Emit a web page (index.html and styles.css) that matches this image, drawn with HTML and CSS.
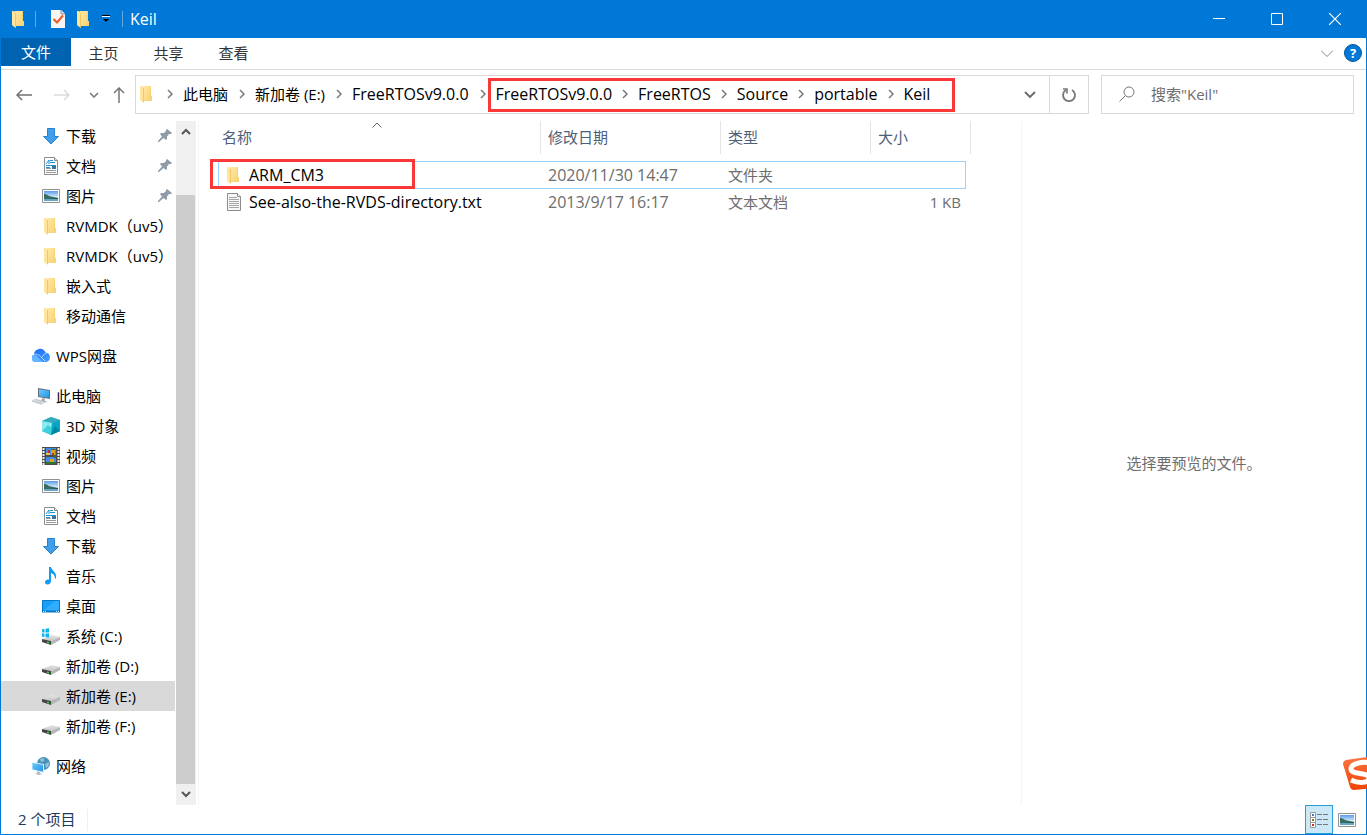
FILE: index.html
```html
<!DOCTYPE html>
<html lang="zh-CN">
<head>
  <meta charset="UTF-8">
  <meta name="viewport" content="width=device-width, initial-scale=1.0">
  <title>Keil</title>
  <link rel="stylesheet" href="styles.css">
</head>
<body>

<!-- 图标 -->
<svg class="sprite" aria-hidden="true">
  <linearGradient id="folder-fill" x1="0" y1="0" x2="1" y2="1">
    <stop offset="0" stop-color="#ffe9a6"/><stop offset="1" stop-color="#f8d172"/>
  </linearGradient>
  <linearGradient id="sky" x1="0" y1="0" x2="0" y2="1">
    <stop offset="0" stop-color="#5a9be8"/><stop offset="0.6" stop-color="#d5ecfa"/><stop offset="1" stop-color="#4f91b5"/>
  </linearGradient>
  <linearGradient id="cloud-fill" x1="0" y1="0" x2="1" y2="1">
    <stop offset="0" stop-color="#1562f5"/><stop offset="1" stop-color="#46a5ff"/>
  </linearGradient>
  <linearGradient id="disk-top" x1="0" y1="0" x2="0" y2="1">
    <stop offset="0" stop-color="#e6e6e6"/><stop offset="1" stop-color="#c4c4c6"/>
  </linearGradient>
  <linearGradient id="screen-fill" x1="0" y1="0" x2="1" y2="1">
    <stop offset="0" stop-color="#69c8fb"/><stop offset="1" stop-color="#2296e6"/>
  </linearGradient>
  <linearGradient id="sogou-fill" x1="0" y1="0" x2="0" y2="1">
    <stop offset="0" stop-color="#fb7644"/><stop offset="1" stop-color="#f04305"/>
  </linearGradient>

  <symbol id="folder" viewBox="0 0 18 18">
    <path d="M5 1h8v10h1v5H5z" fill="#f3cb66"/>
    <path d="M5 1h7.500v10.500H14V16H5z" fill="url(#folder-fill)"/>
    <path d="M2 1h2l2 2v15l-3-2-1-1z" fill="#ffe69c"/>
    <path d="M5.500 3v14" stroke="#efc968" stroke-width="1"/>
  </symbol>
  <symbol id="download" viewBox="0 0 18 18">
    <path d="M5.500 1.500h7v8h4L9 17 1.500 9.500h4z" fill="#409eea" stroke="#2483cf"/>
  </symbol>
  <symbol id="document" viewBox="0 0 18 18">
    <path d="M2.500.5h10l3 3v14h-13z" fill="#fff" stroke="#8c8c8c"/>
    <path d="M12.500.5v3h3" fill="#ddd" stroke="#8c8c8c"/>
    <path d="M4 7l3-4v4M8 3.500h3M8 5.500h5M4 8.500h10M4 10.500h4" fill="none" stroke="#1b91d6"/>
    <path d="M10 9h4v3h-4z" fill="#33739d"/>
    <path d="M4 11.500h5M4 13.500h10M4 15.500h10" stroke="#999"/>
  </symbol>
  <symbol id="text-file" viewBox="0 0 18 18">
    <path d="M2.500.5h10l3 3v14h-13z" fill="#f7f7f7" stroke="#8c8c8c"/>
    <path d="M12.500.5v3h3" fill="#fff" stroke="#8c8c8c"/>
    <path d="M4 4.500h8M4 6.500h10M4 8.500h10M4 10.500h10M4 12.500h10M4 14.500h10" stroke="#a5a5a5"/>
  </symbol>
  <symbol id="picture" viewBox="0 0 18 18">
    <path d="M.5 2.500h17v13H.5z" fill="#fff" stroke="#929292"/>
    <path d="M2 4h14v10H2z" fill="url(#sky)"/>
    <path d="M2 7c3 0 4 2 7 2.500l7 1.500v1H2z" fill="#396c5f"/>
    <path d="M2 12h14v2H2z" fill="#68a5c6"/>
    <path d="M8 12l8-1v1z" fill="#224a48"/>
  </symbol>
  <symbol id="cloud" viewBox="0 0 18 18">
    <path d="M3 15a4 4 0 0 1-1-7.600A6 6 0 0 1 13.500 5.500a4.800 4.800 0 0 1 .5 9.500z" fill="url(#cloud-fill)"/>
    <path d="M0 9c3-2 5-.5 7 2l4 4H3a4 4 0 0 1-3-6z" fill="#65b4ff"/>
    <path d="M1 8c3-2 6 0 8 2l4 4M10 10l2.500-3 2-.5" fill="none" stroke="#d4eaff" stroke-width=".8"/>
  </symbol>
  <symbol id="computer" viewBox="0 0 18 18">
    <path d="M6 1l12 2v9L6 10z" fill="#65717a"/>
    <path d="M7 2.200l10 1.600v7L7 9.200z" fill="url(#screen-fill)"/>
    <path d="M10 11l3 .6V14l3 1-5 .5-2-1z" fill="#a8b0b6"/>
    <path d="M-1 14l5-2 9 3-4 2.500z" fill="#dce0e3" stroke="#b9c0c5" stroke-width=".5"/>
    <path d="M1 14l8 2.200M4 12.800l7 2.200" stroke="#a8b0b6" stroke-width=".5"/>
  </symbol>
  <symbol id="cube" viewBox="0 0 18 18">
    <path d="M0 4l9-4 9 3v11l-9 4-9-4z" fill="#21bcd0"/>
    <path d="M0 4l9-4 9 3-8 3z" fill="#35aabd"/>
    <path d="M0 4l10 2-1 12-9-4z" fill="#8ce9ee"/>
    <path d="M0 14l6-6 4 3-1 7z" fill="#3fd0db"/>
    <path d="M10 6l8-3v11l-9 4z" fill="#08a5c4"/>
    <path d="M9 18l4-9 5 5z" fill="#04859f"/>
  </symbol>
  <symbol id="video" viewBox="0 0 18 18">
    <path d="M0 0h18v18H0z" fill="#4b4b4b"/>
    <path d="M1.500 1v17M16.500 1v17" stroke="#f2f2f2" stroke-width="2" stroke-dasharray="2 1"/>
    <path d="M4 1h10v7H4zM4 10h10v7H4z" fill="#438be8"/>
    <path d="M9 3h4v5H9zM8 12h4v4H8z" fill="#dfa323"/>
    <path d="M4 6h4v2H4z" fill="#f9c44b"/>
    <path d="M6 3h2v3H6zM10 6h2v2h-2z" fill="#c23024"/>
    <path d="M9 2h4v1H9zM4 15h10v2H4zM12 8h2v3h-2z" fill="#36722d"/>
  </symbol>
  <symbol id="music" viewBox="0 0 18 18">
    <path d="M7 0h2c1 4 6 5 5 11l-1 1c0-3-1-5-4-6v8c0 2-1.500 3.500-3.500 3.500S3 16.500 3 15s2-3 4-2.500z" fill="#129bf1"/>
  </symbol>
  <symbol id="desktop" viewBox="0 0 18 18">
    <path d="M.5 3.500h17v11H.5z" fill="#17a0fa" stroke="#0878c2"/>
    <path d="M1 14L13 4h4v10z" fill="#31adff"/>
    <path d="M0 13.500h18v2H0z" fill="#0878c2"/>
    <path d="M1 14.500h3M14 14.500h3" stroke="#cceaff" stroke-dasharray="1 1"/>
  </symbol>
  <symbol id="disk" viewBox="0 0 18 18">
    <path d="M0 12l10-4 8 2-9 4z" fill="url(#disk-top)"/>
    <path d="M0 12l9 2v4L0 15z" fill="#414543"/>
    <path d="M9 14l9-4v3l-9 5z" fill="#b4b5b8"/>
    <path d="M5 14.500l2 .5v1.500L5 16z" fill="#38dd3c"/>
  </symbol>
  <symbol id="system-disk" viewBox="0 0 18 18">
    <path d="M0 12l10-4 8 2-9 4z" fill="url(#disk-top)"/>
    <path d="M0 12l9 2v4L0 15z" fill="#414543"/>
    <path d="M9 14l9-4v3l-9 5z" fill="#b4b5b8"/>
    <path d="M5 14.500l2 .5v1.500L5 16z" fill="#38dd3c"/>
    <path d="M-1 2.500l3.500-.5v3.500H-1zM3.500 1.800L7 1.300v4.200H3.500zM-1 6.500h3.500V10L-1 9.500zM3.500 6.500H7v4l-3.500-.4z" fill="#0eb4ee"/>
  </symbol>
  <symbol id="network" viewBox="0 0 18 18">
    <circle cx="11.500" cy="6.500" r="6.500" fill="#4b92bb"/>
    <path d="M8 2c3-2 5 0 4 2l-3 1zM13 7l4-2c0 4-1 5-3 6z" fill="#8fc3d8"/>
    <path d="M0 5l12 2v9L0 13z" fill="#d9f1fd"/>
    <path d="M.5 6L11 7.800v7L.5 12.200z" fill="url(#screen-fill)"/>
    <path d="M5 14.300l3 .7v1l2 1-3 1-4-1 2-1z" fill="#b4bec4"/>
  </symbol>
  <symbol id="pin" viewBox="0 0 14 14">
    <path d="M8 1l1-1 5 4-1 1h-2L9 7.500V10L8 11 5.500 9 1 13H0v-1l4-4.500L2 5l1-1h3l2-2z" fill="#8f9ba6"/>
  </symbol>
  <symbol id="chevron" viewBox="0 0 6 10">
    <path d="M1 1l4 4-4 4" fill="none" stroke="#777" stroke-width="1.500"/>
  </symbol>
</svg>

<div class="window">

  <!-- 标题栏 -->
  <header class="title-bar">
    <svg class="icon"><use href="#folder"/></svg>
    <span class="title-line"></span>
    <button class="quick-button" aria-label="属性">
      <svg class="icon" viewBox="0 0 18 18">
        <path d="M2 0h10l4 4v14H2z" fill="#f7f5f4"/>
        <path d="M12 0v4h4" fill="#ddd" stroke="#8797a5"/>
        <path d="M4.500 9L8 12.500l6-7" fill="none" stroke="#ea5b22" stroke-width="2"/>
      </svg>
    </button>
    <button class="quick-button" aria-label="新建文件夹"><svg class="icon"><use href="#folder"/></svg></button>
    <button class="quick-button quick-menu" aria-label="自定义快速访问工具栏">
      <svg width="8" height="8" viewBox="0 0 8 8"><path d="M0 .5h8" stroke="#000"/><path d="M0 1.500h8" stroke="#fff"/><path d="M1 4h6L4 7z" fill="#000"/></svg>
    </button>
    <span class="title-line"></span>
    <h1 class="title">Keil</h1>
    <div class="window-buttons">
      <button aria-label="最小化"><svg width="12" height="12" viewBox="0 0 12 12"><path d="M0 5.500h12" stroke="#fff"/></svg></button>
      <button aria-label="最大化"><svg width="12" height="12" viewBox="0 0 12 12"><path d="M.5.5h11v11H.5z" fill="none" stroke="#fff"/></svg></button>
      <button aria-label="关闭"><svg width="12" height="12" viewBox="0 0 12 12"><path d="M0 0l12 12M12 0L0 12" stroke="#fff" stroke-width="1.200"/></svg></button>
    </div>
  </header>

  <!-- 菜单 -->
  <nav class="ribbon">
    <button class="tab file-tab">文件</button>
    <button class="tab">主页</button>
    <button class="tab">共享</button>
    <button class="tab">查看</button>
    <div class="ribbon-right">
      <button aria-label="展开功能区"><svg width="12" height="7" viewBox="0 0 12 7"><path d="M0 .5l6 6 6-6" fill="none" stroke="#888"/></svg></button>
      <button class="help-button" aria-label="帮助">?</button>
    </div>
  </nav>

  <!-- 地址栏 -->
  <div class="toolbar">
    <button class="nav-button" aria-label="后退"><svg width="16" height="12" viewBox="0 0 16 12"><path d="M16 6H1M6 1L1 6l5 5" fill="none" stroke="#707070" stroke-width="1.500"/></svg></button>
    <button class="nav-button" aria-label="前进"><svg width="16" height="12" viewBox="0 0 16 12"><path d="M0 6h15M10 1l5 5-5 5" fill="none" stroke="#dadada" stroke-width="1.500"/></svg></button>
    <button class="nav-button narrow" aria-label="最近浏览的位置"><svg width="10" height="6" viewBox="0 0 10 6"><path d="M1 1l4 4 4-4" fill="none" stroke="#777" stroke-width="1.500"/></svg></button>
    <button class="nav-button narrow" aria-label="上移"><svg width="12" height="16" viewBox="0 0 12 16"><path d="M6 16V1M1 6l5-5 5 5" fill="none" stroke="#777" stroke-width="1.500"/></svg></button>

    <div class="address">
      <svg class="icon"><use href="#folder"/></svg>
      <svg class="arrow"><use href="#chevron"/></svg>
      <a href="#">此电脑</a>
      <svg class="arrow"><use href="#chevron"/></svg>
      <a href="#">新加卷 (E:)</a>
      <svg class="arrow"><use href="#chevron"/></svg>
      <a class="latin" href="#">FreeRTOSv9.0.0</a>
      <svg class="arrow"><use href="#chevron"/></svg>
      <div class="path-marked latin">
        <a href="#">FreeRTOSv9.0.0</a>
        <svg class="arrow"><use href="#chevron"/></svg>
        <a href="#">FreeRTOS</a>
        <svg class="arrow"><use href="#chevron"/></svg>
        <a href="#">Source</a>
        <svg class="arrow"><use href="#chevron"/></svg>
        <a href="#">portable</a>
        <svg class="arrow"><use href="#chevron"/></svg>
        <a href="#">Keil</a>
      </div>
      <button class="address-button history" aria-label="历史记录"><svg width="12" height="8" viewBox="0 0 12 8"><path d="M1 1l5 5 5-5" fill="none" stroke="#666" stroke-width="1.800"/></svg></button>
      <button class="address-button refresh" aria-label="刷新">
        <svg width="16" height="16" viewBox="0 0 16 16"><path d="M11 3A6 6 0 1 1 5 3" fill="none" stroke="#777" stroke-width="1.800"/><path d="M2 2h4v4.500" fill="none" stroke="#777" stroke-width="1.600"/></svg>
      </button>
    </div>

    <label class="search">
      <svg width="16" height="16" viewBox="0 0 16 16"><circle cx="10" cy="6" r="5" fill="none" stroke="#777"/><path d="M6.500 9.500L.5 15.500" stroke="#777"/></svg>
      <input type="text" placeholder='搜索"Keil"' aria-label="搜索">
    </label>
  </div>

  <main class="content">
    <!-- 导航窗格 -->
    <nav class="sidebar">
      <a class="child" href="#"><svg class="icon"><use href="#download"/></svg><span>下载</span><svg class="pin"><use href="#pin"/></svg></a>
      <a class="child" href="#"><svg class="icon"><use href="#document"/></svg><span>文档</span><svg class="pin"><use href="#pin"/></svg></a>
      <a class="child" href="#"><svg class="icon"><use href="#picture"/></svg><span>图片</span><svg class="pin"><use href="#pin"/></svg></a>
      <a class="child" href="#"><svg class="icon"><use href="#folder"/></svg><span>RVMDK（uv5）</span></a>
      <a class="child" href="#"><svg class="icon"><use href="#folder"/></svg><span>RVMDK（uv5）</span></a>
      <a class="child" href="#"><svg class="icon"><use href="#folder"/></svg><span>嵌入式</span></a>
      <a class="child" href="#"><svg class="icon"><use href="#folder"/></svg><span>移动通信</span></a>
      <a class="root" href="#"><svg class="icon"><use href="#cloud"/></svg><span>WPS网盘</span></a>
      <a class="root" href="#"><svg class="icon"><use href="#computer"/></svg><span>此电脑</span></a>
      <a class="child" href="#"><svg class="icon"><use href="#cube"/></svg><span>3D 对象</span></a>
      <a class="child" href="#"><svg class="icon"><use href="#video"/></svg><span>视频</span></a>
      <a class="child" href="#"><svg class="icon"><use href="#picture"/></svg><span>图片</span></a>
      <a class="child" href="#"><svg class="icon"><use href="#document"/></svg><span>文档</span></a>
      <a class="child" href="#"><svg class="icon"><use href="#download"/></svg><span>下载</span></a>
      <a class="child" href="#"><svg class="icon"><use href="#music"/></svg><span>音乐</span></a>
      <a class="child" href="#"><svg class="icon"><use href="#desktop"/></svg><span>桌面</span></a>
      <a class="child" href="#"><svg class="icon"><use href="#system-disk"/></svg><span>系统 (C:)</span></a>
      <a class="child" href="#"><svg class="icon"><use href="#disk"/></svg><span>新加卷 (D:)</span></a>
      <a class="child current" href="#"><svg class="icon"><use href="#disk"/></svg><span>新加卷 (E:)</span></a>
      <a class="child" href="#"><svg class="icon"><use href="#disk"/></svg><span>新加卷 (F:)</span></a>
      <a class="root" href="#"><svg class="icon"><use href="#network"/></svg><span>网络</span></a>
    </nav>

    <div class="scrollbar">
      <button aria-label="向上滚动"><svg width="10" height="7" viewBox="0 0 10 7"><path d="M1 6l4-4 4 4" fill="none" stroke="#555" stroke-width="2"/></svg></button>
      <div class="track"><div class="thumb"></div></div>
      <button aria-label="向下滚动"><svg width="10" height="7" viewBox="0 0 10 7"><path d="M1 1l4 4 4-4" fill="none" stroke="#555" stroke-width="2"/></svg></button>
    </div>

    <!-- 文件列表 -->
    <section class="files">
      <table>
        <thead>
          <tr>
            <th class="name-col">名称<svg class="sort" width="10" height="6" viewBox="0 0 10 6"><path d="M.5 5.500L5 1l4.500 4.500" fill="none" stroke="#666"/></svg></th>
            <th class="date-col">修改日期</th>
            <th class="type-col">类型</th>
            <th class="size-col">大小</th>
          </tr>
        </thead>
        <tbody>
          <tr class="selected">
            <td class="marked"><a class="latin" href="#"><svg class="icon"><use href="#folder"/></svg>ARM_CM3</a></td>
            <td class="latin">2020/11/30 14:47</td>
            <td>文件夹</td>
            <td></td>
          </tr>
          <tr>
            <td><a class="latin" href="#"><svg class="icon"><use href="#text-file"/></svg>See-also-the-RVDS-directory.txt</a></td>
            <td class="latin">2013/9/17 16:17</td>
            <td>文本文档</td>
            <td class="size">1 KB</td>
          </tr>
        </tbody>
      </table>
    </section>

    <aside class="preview">选择要预览的文件。</aside>
  </main>

  <!-- 状态栏 -->
  <footer class="status-bar">
    <span class="count">2 个项目</span>
    <div class="views">
      <button class="view-button active" aria-label="详细信息">
        <svg width="18" height="16" viewBox="0 0 18 16">
          <path d="M.5.5h5v5h-5zM.5 5.500h5v5h-5zM.5 10.500h5v5h-5z" fill="#fff" stroke="#999"/>
          <path d="M2 2h2v2H2z" fill="#3a7cc2"/><path d="M2 7h2v2H2z" fill="#8c7424"/><path d="M2 12h2v2H2z" fill="#d02b1e"/>
          <path d="M7 2.500h11M7 7.500h11M7 12.500h11" stroke="#777" stroke-dasharray="5 1"/>
        </svg>
      </button>
      <button class="view-button" aria-label="大缩略图"><svg class="icon"><use href="#picture"/></svg></button>
    </div>
  </footer>

  <!-- 输入法图标 -->
  <div class="ime">
    <svg width="36" height="36" viewBox="0 0 36 36">
      <path d="M3 4L30 0q3 0 4 3l2 26q0 3-3 3L11 34q-3 0-4-3L0 8q0-3 3-4z" fill="url(#sogou-fill)"/>
      <path d="M28 7C18 5 8 8 8 13c0 6 18 3 18 9 0 5-10 6-18 2" fill="none" stroke="#fff" stroke-width="5"/>
    </svg>
  </div>
</div>

</body>
</html>
```
FILE: styles.css
```css
*,
*::before,
*::after {
  box-sizing: border-box;
}

body {
  margin: 0;
  font-family: "Open Sans", "Noto Sans CJK SC", sans-serif;
  font-size: 15px;
  line-height: 20px;
  color: #000;
  background-color: #fff;
}

button {
  display: flex;
  justify-content: center;
  align-items: center;
  padding: 0;
  border: none;
  background: none;
  font: inherit;
  color: inherit;
}

a {
  color: inherit;
  text-decoration: none;
  white-space: nowrap;
}

svg {
  flex-shrink: 0;
}

.sprite {
  position: absolute;
  width: 0;
  height: 0;
}

.icon {
  display: block;
  width: 18px;
  height: 18px;
  overflow: visible;
}

/* 英文和数字稍大 */
.latin {
  font-size: 16px;
}

.window {
  position: relative;
  display: flex;
  flex-direction: column;
  min-height: 100vh;
  border: 1px solid #0078d7;
  border-top: none;
}

/* 标题栏 */
.title-bar {
  display: flex;
  align-items: center;
  height: 38px;
  padding-left: 9px;
  background-color: #0078d7;
  color: #fff;
}

.title-line {
  width: 1px;
  height: 16px;
  margin: 0 7px;
  background-color: #67a9df;
}

.title-line + .quick-button {
  margin-left: 2px;
}

.quick-button {
  width: 26px;
}

.quick-menu {
  width: 18px;
}

.title {
  margin: 0;
  font-size: 16px;
  font-weight: normal;
}

.window-buttons {
  display: flex;
  margin-left: auto;
  padding-right: 2px;
}

.window-buttons button {
  width: 58px;
  height: 38px;
}

/* 菜单 */
.ribbon {
  display: flex;
  height: 32px;
  border-bottom: 1px solid #dadbdc;
  color: #333;
}

.tab {
  width: 65px;
  height: 29px;
}

.file-tab {
  width: 70px;
  height: 28px;
  background-color: #0063b1;
  color: #fff;
}

.ribbon-right {
  display: flex;
  align-items: center;
  gap: 11px;
  margin-left: auto;
  padding: 0 4px 1px 0;
}

.help-button {
  width: 18px;
  height: 18px;
  border: 1px solid #00569d;
  border-radius: 50%;
  background-color: #0078d7;
  color: #fff;
  font-size: 13px;
  font-weight: bold;
}

/* 地址栏 */
.toolbar {
  display: flex;
  padding: 5px 12px 7px 4px;
}

.nav-button {
  width: 38px;
}

.nav-button.narrow {
  width: 25px;
}

.address {
  display: flex;
  align-items: center;
  flex: 1;
  height: 39px;
  margin-left: 4px;
  padding: 0 0 2px 2px;
  border: 1px solid #d9d9d9;
}

.arrow {
  width: 6px;
  height: 10px;
  margin: 0 10px 0 11px;
}

.path-marked {
  position: relative;
  display: flex;
  align-items: center;
}

.path-marked .arrow {
  margin: 0 10px;
}

/* 红色标记框 */
.path-marked::after {
  content: "";
  position: absolute;
  top: -6px;
  right: -25px;
  bottom: -8px;
  left: -8px;
  border: 3px solid #fb3838;
  pointer-events: none;
}

.address-button {
  width: 39px;
  height: 37px;
  margin-bottom: -2px;
}

.history {
  margin-left: auto;
}

.refresh {
  border-left: 1px solid #d9d9d9;
}

.search {
  display: flex;
  align-items: center;
  gap: 16px;
  width: 253px;
  height: 39px;
  margin-left: 12px;
  padding: 0 0 2px 17px;
  border: 1px solid #d9d9d9;
}

.search input {
  flex: 1;
  min-width: 0;
  padding: 0;
  border: none;
  outline: none;
  background: none;
  font: inherit;
}

.search input::placeholder {
  color: #6d6d6d;
}

.content {
  display: flex;
  flex: 1;
}

/* 导航窗格 */
.sidebar {
  width: 175px;
  padding-bottom: 24px;
}

.sidebar a {
  display: flex;
  align-items: center;
  gap: 6px;
  height: 30px;
  margin-right: 1px;
  padding-right: 3px;
}

.sidebar .child {
  padding-left: 41px;
}

.sidebar .root {
  margin-top: 10px;
  padding-left: 31px;
}

.sidebar .current {
  background-color: #d9d9d9;
}

.pin {
  width: 14px;
  height: 14px;
  margin-left: auto;
}

.scrollbar {
  display: flex;
  flex-direction: column;
  width: 20px;
  background-color: #f0f0f0;
}

.scrollbar button {
  height: 21px;
}

.track {
  display: flex;
  flex: 1;
  padding: 53px 1px 0 0;
}

.thumb {
  flex: 1;
  background-color: #cdcdcd;
}

/* 文件列表 */
.files {
  flex: 1;
  margin-left: 2px;
  padding-left: 19px;
  border-left: 1px solid #f5f5f5;
}

table {
  table-layout: fixed;
  width: 753px;
  border-collapse: separate;
  border-spacing: 0;
}

th {
  position: relative;
  height: 33px;
  padding: 0 7px 2px;
  border-right: 1px solid #e5e5e5;
  color: #4c607a;
  font-weight: normal;
  text-align: left;
}

.name-col {
  width: 323px;
  padding-left: 4px;
}

.date-col {
  width: 180px;
}

.type-col {
  width: 150px;
}

.size-col {
  width: 100px;
}

.sort {
  position: absolute;
  top: 1px;
  left: 50%;
  margin-left: -7px;
}

tbody::before {
  content: "";
  display: block;
  height: 7px;
}

td {
  height: 27px;
  padding: 0 10px 0 7px;
  color: #6d6d6d;
}

td a {
  display: flex;
  align-items: center;
  gap: 6px;
  color: #000;
}

.selected {
  position: relative;
}

.marked::before {
  content: "";
  position: absolute;
  top: 0;
  right: 5px;
  bottom: -1px;
  left: 0;
  border: 1px solid #99d1ff;
  pointer-events: none;
}

/* 红色标记框 */
.marked::after {
  content: "";
  position: absolute;
  top: -2px;
  bottom: -1px;
  left: -8px;
  width: 205px;
  border: 3px solid #fb3838;
  pointer-events: none;
}

.size {
  text-align: right;
}

.preview {
  display: flex;
  justify-content: center;
  align-items: center;
  width: 345px;
  border-left: 1px solid #f5f5f5;
  color: #6d6d6d;
}

/* 状态栏 */
.status-bar {
  display: flex;
  align-items: center;
  height: 29px;
  padding-left: 17px;
  color: #1e395b;
}

.count {
  padding: 0 12px 2px 0;
  border-right: 1px solid #f0f0f0;
}

.views {
  display: flex;
  margin-left: auto;
  padding-right: 5px;
}

.view-button {
  width: 28px;
  height: 29px;
}

.view-button.active {
  border: 1px solid #26a0da;
  background-color: #cbe8f6;
}

/* 图标超出窗口右边的部分不显示 */
.ime {
  position: absolute;
  right: -1px;
  bottom: 42px;
  width: 24px;
  height: 36px;
  overflow: hidden;
}
```
